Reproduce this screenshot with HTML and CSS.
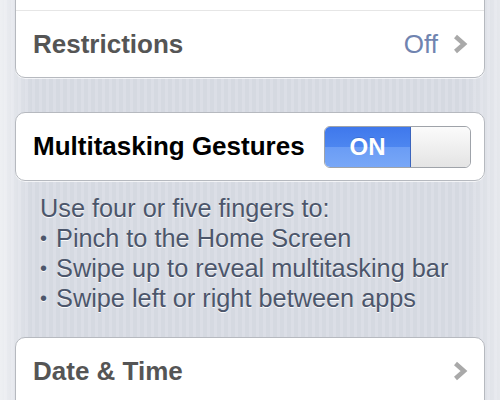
FILE: index.html
```html
<!DOCTYPE html>
<html lang="en">
<head>
    <meta charset="UTF-8">
    <meta name="viewport" content="width=device-width, initial-scale=1.0">
    <title>General</title>
    <link rel="stylesheet" href="styles.css">
</head>
<body>
    <div class="page">
        <div class="group group-top">
            <div class="cell"></div>
            <div class="cell">
                <span class="label muted">Restrictions</span>
                <span class="value">Off</span>
                <svg class="chevron" width="15" height="20" viewBox="0 0 15 20">
                    <polyline points="2.5,2.5 11,10 2.5,17.5" fill="none" stroke="#a9a9a9" stroke-width="4.5"/>
                </svg>
            </div>
        </div>

        <div class="group group-switch">
            <div class="cell">
                <span class="label">Multitasking Gestures</span>
                <div class="switch">
                    <span class="switch-on">ON</span>
                    <span class="switch-knob"></span>
                </div>
            </div>
        </div>

        <p class="footer">
            Use four or five fingers to:<br>
            <span class="dot">•</span> Pinch to the Home Screen<br>
            <span class="dot">•</span> Swipe up to reveal multitasking bar<br>
            <span class="dot">•</span> Swipe left or right between apps
        </p>

        <div class="group">
            <div class="cell">
                <span class="label muted">Date &amp; Time</span>
                <svg class="chevron" width="15" height="20" viewBox="0 0 15 20">
                    <polyline points="2.5,2.5 11,10 2.5,17.5" fill="none" stroke="#a9a9a9" stroke-width="4.5"/>
                </svg>
            </div>
            <div class="cell"></div>
        </div>
    </div>
</body>
</html>
```

FILE: styles.css
```css
html, body {
    margin: 0;
    height: 100%;
    overflow: hidden;
}
body {
    font-family: "Liberation Sans", Arial, sans-serif;
    background-color: #d8dce4;
    background-image:
        linear-gradient(90deg, rgba(255,255,255,0.6) 0, rgba(255,255,255,0) 32px, rgba(255,255,255,0) 465px, rgba(255,255,255,0.4) 500px),
        repeating-linear-gradient(90deg, #d5d9e1 0, #d5d9e1 4px, #dbdee6 4px, #dbdee6 7px);
}
.page {
    padding: 0 15px;
}
.group {
    background: white;
    border: 1px solid #b6b9bf;
    border-radius: 10px;
    box-shadow: 0 1px 0 rgba(255,255,255,0.7);
}
.group-top {
    margin-top: -57px;
}
.group-switch {
    margin-top: 34px;
}
.cell {
    height: 66px;
    display: flex;
    align-items: center;
    padding: 0 13px 0 17px;
}
.cell + .cell {
    border-top: 1px solid #e6e6e6;
}
.group-switch .cell {
    height: 67px;
}
.label {
    flex: 1;
    font-size: 26px;
    font-weight: bold;
    color: #000;
}
.label.muted {
    color: #555;
}
.value {
    font-size: 26px;
    color: #7084b0;
    margin-right: 15px;
}
.chevron {
    margin-right: 3px;
}
.switch {
    display: flex;
    width: 147px;
    height: 42px;
    border-radius: 6px;
    overflow: hidden;
    box-sizing: border-box;
    border: 1px solid #9fa3a9;
}
.switch-on {
    width: 85px;
    display: flex;
    align-items: center;
    justify-content: center;
    color: white;
    font-size: 24px;
    font-weight: bold;
    background: linear-gradient(#3f78ec 0, #4d86f0 50%, #6a9cf5 50%, #78a7f7 100%);
    border-right: 1px solid #3a64bd;
    text-shadow: 0 -1px 0 rgba(0,0,0,0.15);
}
.switch-knob {
    flex: 1;
    border-radius: 0 5px 5px 0;
    background: linear-gradient(#fbfbfb, #e4e4e4);
}
.footer {
    margin: 0;
    padding: 12px 0 24px 25px;
    font-size: 25.3px;
    line-height: 30px;
    color: #4c566b;
    text-shadow: 0 1px 0 rgba(255,255,255,0.9);
}
.dot {
    font-size: 20px;
    line-height: 0;
    display: inline-block;
    width: 9px;
    vertical-align: 2px;
}
```
